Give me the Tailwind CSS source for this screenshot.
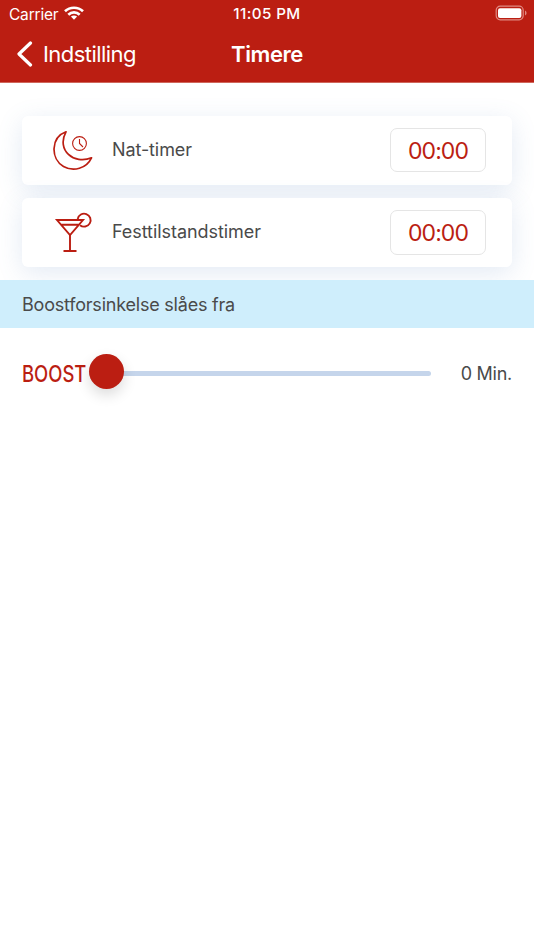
<!DOCTYPE html>
<html lang="da">
<head>
<meta charset="utf-8">
<title>Timere</title>
<script src="https://cdn.jsdelivr.net/npm/@tailwindcss/browser@4"></script>
</head>
<body class="h-[950px] w-[534px] overflow-hidden bg-white font-['Inter','Liberation_Sans',sans-serif] text-[#4a4a4a]">
<header class="h-[83px] border-b border-[#cf675b] bg-[#bb1e12] text-white">
  <div class="grid h-[27px] grid-cols-3 items-center pr-[7px] pl-[9px]">
    <div class="flex items-center gap-[6px]">
      <span class="pt-[2px] text-[15.5px] leading-[25px] tracking-[-0.2px]">Carrier</span>
      <svg class="-mt-px h-[14px] w-[20px]" viewBox="0 0 20 14" fill="none" stroke="currentColor" stroke-width="2.7">
        <path d="M1 5.2C6 .6 14 .6 19 5.2M4.3 8.7c3.2-3 8.200-3 11.400 0"/>
        <path d="M10 13.700 6.900 10.600c1.700-1.600 4.500-1.600 6.200 0z" fill="currentColor" stroke="none"/>
      </svg>
    </div>
    <span class="-ml-[2px] text-center text-[15.2px] leading-[27px] font-medium tracking-[0.4px]">11:05 PM</span>
    <svg class="-mt-px justify-self-end" width="32" height="16" viewBox="0 0 32 16" fill="none">
      <rect x="1.200" y="1.200" width="27" height="13.600" rx="4" stroke="#e08a82" stroke-width="1.200"/>
      <rect x="3" y="3.200" width="23.400" height="9.700" rx="2" fill="white"/>
      <path d="M30 5.500v5q1.600-.7 1.600-2.500T30 5.500" fill="#e08a82"/>
    </svg>
  </div>
  <div class="grid h-[54px] grid-cols-[1fr_auto_1fr] items-center">
    <div class="flex items-center gap-[10px] pl-[17px]">
      <svg width="16" height="26" viewBox="0 0 16 26" fill="none" stroke="currentColor" stroke-width="3.200" stroke-linecap="round" stroke-linejoin="round"><path d="M13.500 2 2 13l11.500 11"/></svg>
      <span class="text-[22px] leading-[28px] tracking-[-0.55px]">Indstilling</span>
    </div>
    <h1 class="text-[22px] leading-[28px] font-semibold tracking-[-0.4px]">Timere</h1>
  </div>
</header>
<main>
  <section class="flex flex-col gap-[13px] px-[22px] pt-[33px] pb-[13px]">
    <div class="flex h-[69px] items-center rounded-md bg-white pr-[26px] pb-[2px] pl-[30px] shadow-[0_6px_26px_rgba(80,125,185,0.16)]">
      <svg class="mr-[18px]" width="42" height="42" viewBox="0 0 42 42" fill="none" stroke="#bb1e12">
        <path stroke-width="1.700" stroke-linejoin="round" d="M14 2.800C-1.500 8.500-1.500 30 11.500 37.500c10 5.500 23 2 28-8.700C22 36 4 21 14 2.800Z"/>
        <circle cx="27.500" cy="14.500" r="6.900" stroke-width="1.100"/>
        <path d="M27.500 10v4.500l3.500 3.500" stroke-width="1.100"/>
      </svg>
      <span class="flex-1 text-[18px] leading-6 tracking-[-0.1px]">Nat-timer</span>
      <div class="flex h-[44px] w-[96px] items-center justify-center rounded-[7px] border border-[#e5e5e5] pt-[4px] text-[23px] tracking-[-0.95px] text-[#bb1e12]">00:00</div>
    </div>
    <div class="flex h-[69px] items-center rounded-md bg-white pr-[26px] pb-px pl-[30px] shadow-[0_6px_26px_rgba(80,125,185,0.16)]">
      <svg class="mr-[18px] -mt-px" width="42" height="42" viewBox="0 0 42 42" fill="none" stroke="#bb1e12" stroke-width="1.900">
        <path d="M5 9h26L18 24zM8.500 13.700h18.700M18 24v16M11.500 40h13"/>
        <path d="M25.700 8a6.500 6.500 0 1 1 2.300 6.200"/>
      </svg>
      <span class="flex-1 text-[18px] leading-6 tracking-[-0.06px]">Festtilstandstimer</span>
      <div class="flex h-[45px] w-[96px] items-center justify-center rounded-[7px] border border-[#e5e5e5] pt-[3px] text-[23px] tracking-[-0.95px] text-[#bb1e12]">00:00</div>
    </div>
  </section>
  <h2 class="relative flex h-[48px] items-center bg-[#cfeefc] px-[22px] text-[18px] tracking-[-0.21px]">Boostforsinkelse slåes fra</h2>
  <div class="flex h-[90px] items-center px-[22px]">
    <span class="w-[67px] origin-left scale-x-[0.82] pt-[2px] text-[22.500px] font-medium text-[#bb1e12]">BOOST</span>
    <div class="relative flex h-[35px] w-[342px] items-center">
      <div class="h-[5px] w-full rounded-full bg-[#c5d5eb]"></div>
      <div class="absolute -top-[2px] left-0 size-[35px] rounded-full bg-[#bb1e12] shadow-[0_6px_14px_rgba(0,0,0,0.14)]"></div>
    </div>
    <span class="flex-1 text-right text-[18px] tracking-[-0.25px]">0 Min.</span>
  </div>
</main>
</body>
</html>
